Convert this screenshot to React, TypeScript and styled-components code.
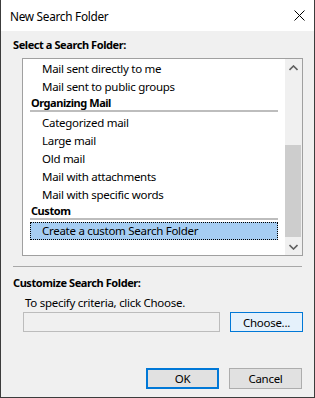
import React from "react";
import styled, { createGlobalStyle } from "styled-components";

const Global = createGlobalStyle`
  html, body { margin: 0; padding: 0; background: #f0f0f0; }
  body { font-family: "Noto Sans", "Segoe UI", sans-serif; font-size: 11.5px; letter-spacing: -0.28px; color: #000; }
  * { box-sizing: border-box; }
`;

const Window = styled.div`
  width: 315px;
  height: 398px;
  display: flex;
  flex-direction: column;
  background: #f0f0f0;
  border-left: 1px solid #3c3c3c;
  border-right: 1px solid #3c3c3c;
  border-bottom: 1px solid #3c3c3c;
  overflow: hidden;
`;

const TitleBar = styled.div`
  height: 31px;
  flex: none;
  background: #fff;
  display: flex;
  align-items: center;
  justify-content: space-between;
  padding-left: 9px;
`;

const Title = styled.span`
  font-size: 11.8px;
`;

const CloseBtn = styled.div`
  width: 30px;
  height: 31px;
  display: flex;
  align-items: center;
  justify-content: center;
`;

const Body = styled.div`
  flex: 1;
  display: flex;
  flex-direction: column;
  padding: 0 11px;
`;

const GroupLabel = styled.div<{ $top: number }>`
  font-weight: 700;
  font-size: 11px;
  letter-spacing: -0.42px;
  line-height: 16px;
  height: 16px;
  padding-left: 1px;
  margin-top: ${(p) => p.$top}px;
`;

const ListBox = styled.div`
  margin: 5px 0 0 10px;
  width: 281px;
  height: 198px;
  border: 1px solid #a0a0a0;
  background: #fff;
  display: flex;
`;

const ListContent = styled.div`
  flex: 1;
  display: flex;
  flex-direction: column;
  padding: 1px 7px 0 7px;
`;

const Item = styled.div<{ $selected?: boolean }>`
  height: 18px;
  line-height: 16px;
  padding-left: 11px;
  border: 1px ${(p) => (p.$selected ? "dotted #000" : "solid transparent")};
  background: ${(p) => (p.$selected ? "#a6cdf2" : "transparent")};
  white-space: nowrap;
`;

const Header = styled.div`
  height: 14px;
  line-height: 14px;
  font-weight: 700;
  font-size: 11px;
  letter-spacing: -0.45px;
  padding-left: 1px;
`;

const HeaderRule = styled.div`
  height: 2px;
  background: #bdbdbd;
  margin-bottom: 2px;
`;

const ScrollBar = styled.div`
  width: 17px;
  flex: none;
  background: #f0f0f0;
  display: flex;
  flex-direction: column;
`;

const ScrollArrow = styled.div`
  height: 17px;
  flex: none;
  display: flex;
  align-items: center;
  justify-content: center;
`;

const Track = styled.div`
  flex: 1;
  display: flex;
  flex-direction: column;
  justify-content: flex-end;
  padding-bottom: 1px;
`;

const Thumb = styled.div`
  height: 92px;
  margin: 0 1px 0 0;
  background: #cdcdcd;
`;

const Separator = styled.div`
  margin: 10px 1px 0 1px;
  height: 1px;
  background: #a8a8a8;
`;

const Hint = styled.div`
  margin: 4px 0 0 13px;
  line-height: 16px;
`;

const Row = styled.div<{ $top: number }>`
  display: flex;
  margin-top: ${(p) => p.$top}px;
  padding-left: 11px;
  gap: 10px;
  align-items: flex-start;
`;

const Field = styled.div`
  width: 197px;
  height: 20px;
  border: 1px solid #bcbcbc;
  background: #f0f0f0;
`;

const Button = styled.div<{ $variant?: "focus" | "default" | "normal" }>`
  width: 73px;
  height: ${(p) => (p.$variant === "focus" ? 20 : 21)}px;
  display: flex;
  align-items: center;
  justify-content: center;
  background: ${(p) => (p.$variant === "focus" ? "#e5f1fb" : "#e1e1e1")};
  border: ${(p) =>
    p.$variant === "focus"
      ? "1px solid #0078d7"
      : p.$variant === "default"
      ? "2px solid #0078d7"
      : "1px solid #adadad"};
`;

const Footer = styled(Row)`
  padding-left: 134px;
`;

const Up = () => (
  <svg width="9" height="6" viewBox="0 0 9 6">
    <path d="M0.5 5 L4.5 1 L8.5 5" fill="none" stroke="#606060" strokeWidth="1.6" />
  </svg>
);
const Down = () => (
  <svg width="9" height="6" viewBox="0 0 9 6">
    <path d="M0.5 1 L4.5 5 L8.5 1" fill="none" stroke="#606060" strokeWidth="1.6" />
  </svg>
);

const sections: { header?: string; items: string[] }[] = [
  { items: ["Mail sent directly to me", "Mail sent to public groups"] },
  {
    header: "Organizing Mail",
    items: ["Categorized mail", "Large mail", "Old mail", "Mail with attachments", "Mail with specific words"],
  },
  { header: "Custom", items: ["Create a custom Search Folder"] },
];

export default function App() {
  return (
    <>
      <Global />
      <Window>
        <TitleBar>
          <Title>New Search Folder</Title>
          <CloseBtn>
            <svg width="11" height="11" viewBox="0 0 11 11">
              <path d="M0.5 0.5 L10.5 10.5 M10.5 0.5 L0.5 10.5" stroke="#000" strokeWidth="1" />
            </svg>
          </CloseBtn>
        </TitleBar>
        <Body>
          <GroupLabel $top={6}>Select a Search Folder:</GroupLabel>
          <ListBox>
            <ListContent>
              {sections.map((s, i) => (
                <React.Fragment key={i}>
                  {s.header && (
                    <>
                      <Header>{s.header}</Header>
                      <HeaderRule />
                    </>
                  )}
                  {s.items.map((it) => (
                    <Item key={it} $selected={it === "Create a custom Search Folder"}>
                      {it}
                    </Item>
                  ))}
                </React.Fragment>
              ))}
            </ListContent>
            <ScrollBar>
              <ScrollArrow>
                <Up />
              </ScrollArrow>
              <Track>
                <Thumb />
              </Track>
              <ScrollArrow>
                <Down />
              </ScrollArrow>
            </ScrollBar>
          </ListBox>
          <Separator />
          <GroupLabel $top={8}>Customize Search Folder:</GroupLabel>
          <Hint>To specify criteria, click Choose.</Hint>
          <Row $top={1}>
            <Field />
            <Button $variant="focus">Choose...</Button>
          </Row>
          <Footer $top={36}>
            <Button $variant="default">OK</Button>
            <Button>Cancel</Button>
          </Footer>
        </Body>
      </Window>
    </>
  );
}
